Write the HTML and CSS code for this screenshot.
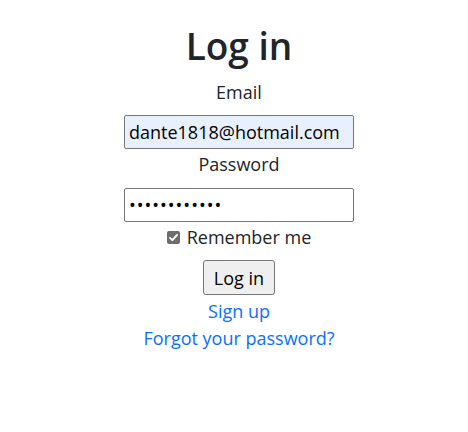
FILE: index.html
```html
<!DOCTYPE html>
<html lang="en">
<head>
<meta charset="utf-8">
<title>Log in</title>
<link rel="stylesheet" href="styles.css">
</head>
<body>
<main class="page">
  <h1 class="title">Log in</h1>
  <form class="form">
    <label class="label label-email" for="email">Email</label>
    <input class="field field-filled" id="email" type="email" value="dante1818@hotmail.com">
    <label class="label label-password" for="pw">Password</label>
    <input class="field field-password" id="pw" type="password" value="dante1818pwd">
    <div class="remember">
      <span class="check"><svg viewBox="0 0 13 13" width="13" height="13"><rect x="0" y="0" width="13" height="13" rx="2" fill="#6d6d6d"/><path d="M3 6.8 L5.4 9.2 L10 4" fill="none" stroke="#fff" stroke-width="1.9" stroke-linecap="round" stroke-linejoin="round"/></svg></span>
      <span>Remember me</span>
    </div>
    <button class="btn" type="button">Log in</button>
  </form>
  <a class="link link-signup" href="#">Sign up</a>
  <a class="link" href="#">Forgot your password?</a>
</main>
</body>
</html>
```
FILE: styles.css
```css
html, body {
  margin: 0;
  padding: 0;
  background: #fff;
}
body {
  font-family: "Open Sans", "Noto Sans", sans-serif;
  font-size: 18px;
  line-height: 27px;
  color: #212529;
}
.page {
  display: flex;
  flex-direction: column;
  align-items: center;
  padding: 25px 0 0 10px;
}
.title {
  margin: 0 0 12px;
  font-size: 37px;
  line-height: 42px;
  font-weight: 600;
}
.form {
  display: flex;
  flex-direction: column;
  align-items: center;
}
.label {
  display: block;
}
.label-password {
  margin-top: 2px;
}
.field {
  box-sizing: border-box;
  width: 230px;
  height: 34px;
  margin: 9px 0 0;
  padding: 1px 4px;
  border: 1px solid #767676;
  border-radius: 2px;
  font-family: inherit;
  font-size: 18px;
  color: #000;
  background: #fff;
}
.field-filled {
  background: #e8f0fe;
}
.field-password {
  margin-top: 10px;
  letter-spacing: 1px;
}
.remember {
  display: flex;
  align-items: center;
  gap: 7px;
  margin-top: 2px;
}
.check {
  display: flex;
  width: 13px;
  height: 13px;
}
.btn {
  box-sizing: border-box;
  height: 35px;
  margin-top: 9px;
  padding: 0 10px;
  border: 1px solid #767676;
  border-radius: 3px;
  background: #efefef;
  font-family: inherit;
  font-size: 18px;
  color: #000;
}
.link {
  color: #0d6efd;
  text-decoration: none;
}
.link-signup {
  margin-top: 3px;
}
```
